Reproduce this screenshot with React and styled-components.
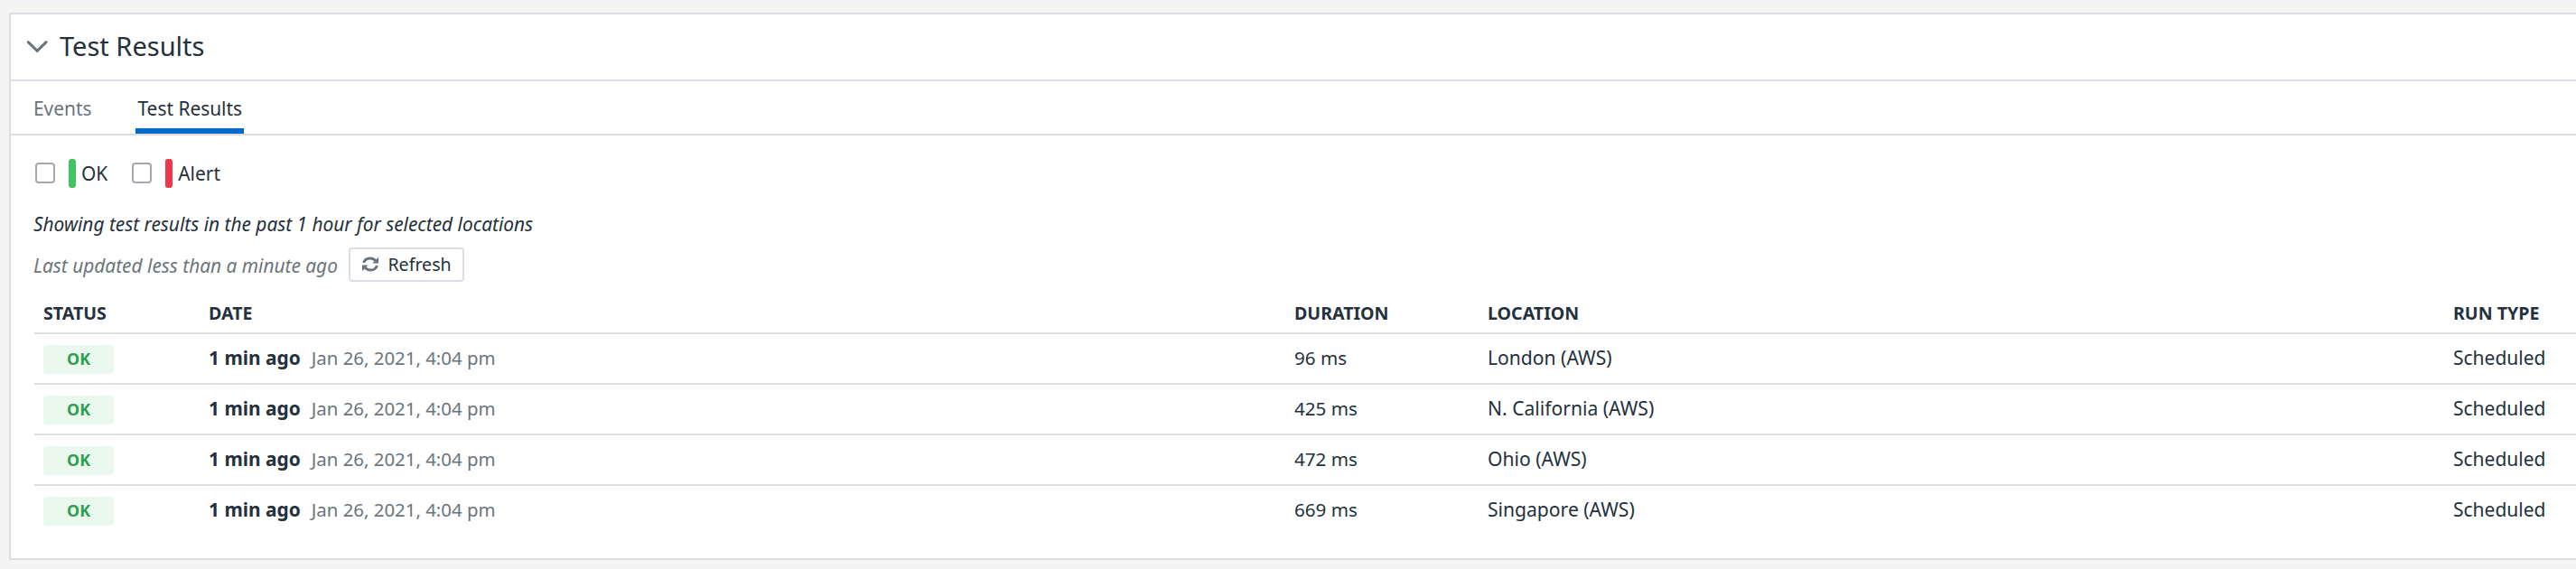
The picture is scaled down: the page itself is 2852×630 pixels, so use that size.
import React from 'react';
import styled, { createGlobalStyle } from 'styled-components';

const ink = '#24313c';
const muted = '#6b757c';
const line = '#dddde3';

const GlobalStyle = createGlobalStyle`
  * { box-sizing: border-box; }
  html, body { margin: 0; padding: 0; }
  body {
    background: #f4f4f4;
    color: ${ink};
    font: 400 20.9px/32px "Noto Sans", sans-serif;
    white-space: nowrap;
    overflow: hidden;
  }
`;

const Page = styled.main`
  height: 630px;
  padding: 14px 0 10px 10px;
`;

const Panel = styled.section`
  height: 606px;
  background: #fff;
  border: 2px solid ${line};
  border-right: 0;
`;

const PanelHeader = styled.header`
  display: flex;
  align-items: center;
  gap: 13px;
  height: 74px;
  padding: 0 0 2px 17px;
  border-bottom: 2px solid ${line};
`;

const Title = styled.h2`
  margin: 0;
  font-size: 29px;
  font-weight: 400;
  line-height: 40px;
`;

const Tabs = styled.nav`
  display: flex;
  gap: 47px;
  height: 60px;
  padding-left: 23px;
  border-bottom: 2px solid ${line};
`;

const Tab = styled.a`
  height: 58px;
  padding: 8px 2px 0;
  line-height: 45px;
  color: ${(p) => (p.$active ? ink : muted)};
  border-bottom: 6px solid ${(p) => (p.$active ? '#006bc9' : 'transparent')};
`;

const Body = styled.div`
  padding: 26px 0 0 26px;
`;

const Filters = styled.div`
  display: flex;
  gap: 26px;
  height: 32px;
`;

const Filter = styled.label`
  display: flex;
  align-items: center;
`;

const Checkbox = styled.input`
  appearance: none;
  width: 22px;
  height: 23px;
  margin: 0 15px 1px 1px;
  border: 2px solid #a3a9ae;
  border-radius: 4px;
  background: #fff;
`;

const Swatch = styled.span`
  width: 8px;
  height: 32px;
  margin-right: 6px;
  border-radius: 3px;
  background: ${(p) => p.$color};
`;

const Summary = styled.p`
  margin: 24px 0 10px -1px;
  font-size: 20.85px;
  font-style: italic;
`;

const Updated = styled.div`
  display: flex;
  gap: 12px;
  height: 38px;
  margin-left: -1px;
`;

const UpdatedText = styled.span`
  padding-top: 4px;
  font-size: 20.85px;
  font-style: italic;
  color: ${muted};
`;

const RefreshButton = styled.button`
  display: flex;
  align-items: center;
  gap: 10.5px;
  width: 128px;
  height: 38px;
  padding: 0 0 1px 13px;
  border: 2px solid ${line};
  border-radius: 4px;
  background: #fff;
  color: ${ink};
  font: 400 19.6px/32px "Noto Sans", sans-serif;
`;

const Row = styled.div`
  display: grid;
  grid-template-columns: 183px 1202px 214px 1069px 1fr;
  align-items: center;
  height: 56px;
  padding: 0 0 0 10px;
  border-bottom: 2px solid ${(p) => (p.$last ? 'transparent' : '#dfdfe2')};
`;

const HeadRow = styled(Row)`
  height: 58px;
  padding-top: 15px;
  font-size: 19.6px;
  font-weight: 700;
`;

const Cell = styled.div`
  padding-bottom: 2px;
  font-size: ${(p) => p.$size || 'inherit'};
`;

const Badge = styled.span`
  display: block;
  width: 78px;
  height: 32px;
  margin-top: 2px;
  border-radius: 4px;
  background: #eaf8ee;
  color: #2f9e4f;
  font-size: 17.8px;
  font-weight: 700;
  line-height: 30px;
  text-align: center;
`;

const Ago = styled.strong`
  margin-right: 12px;
  font-weight: 700;
`;

const Stamp = styled.span`
  font-size: 20.4px;
  color: ${muted};
`;

const ChevronIcon = () => (
  <svg width="24" height="16" viewBox="0 0 24 16" fill="none">
    <path d="M2.3 3.6 12.2 13.4 22.1 3.6" stroke="#6b757c" strokeWidth="3" strokeLinecap="round" />
  </svg>
);

const RefreshIcon = () => (
  <svg width="18" height="17" viewBox="0 0 18 17" fill="none" stroke="#6b757c" strokeWidth="3">
    <path d="M1.7 7C2.5 3.9 5.3 2 8.8 2c2.6 0 4.6 1 6 2.8" />
    <path d="M16.3 10c-.8 3.1-3.6 5-7.1 5-2.6 0-4.6-1-6-2.8" />
    <path d="M18 .8v6.6h-6.6z" fill="#6b757c" stroke="none" />
    <path d="M0 16.2v-6.6h6.6z" fill="#6b757c" stroke="none" />
  </svg>
);

const results = [
  { duration: '96 ms', location: 'London (AWS)' },
  { duration: '425 ms', location: 'N. California (AWS)' },
  { duration: '472 ms', location: 'Ohio (AWS)' },
  { duration: '669 ms', location: 'Singapore (AWS)' },
];

export default function App() {
  return (
    <Page>
      <GlobalStyle />
      <Panel>
        <PanelHeader>
          <ChevronIcon />
          <Title>Test Results</Title>
        </PanelHeader>
        <Tabs>
          <Tab>Events</Tab>
          <Tab $active>Test Results</Tab>
        </Tabs>
        <Body>
          <Filters>
            <Filter><Checkbox type="checkbox" /><Swatch $color="#41c464" />OK</Filter>
            <Filter><Checkbox type="checkbox" /><Swatch $color="#eb364b" />Alert</Filter>
          </Filters>
          <Summary>Showing test results in the past 1 hour for selected locations</Summary>
          <Updated>
            <UpdatedText>Last updated less than a minute ago</UpdatedText>
            <RefreshButton><RefreshIcon />Refresh</RefreshButton>
          </Updated>
          <HeadRow>
            {['STATUS', 'DATE', 'DURATION', 'LOCATION', 'RUN TYPE'].map((h) => <Cell key={h}>{h}</Cell>)}
          </HeadRow>
          {results.map((r, i) => (
            <Row key={r.location} $last={i === results.length - 1}>
              <Badge>OK</Badge>
              <Cell><Ago>1 min ago</Ago><Stamp>Jan 26, 2021, 4:04 pm</Stamp></Cell>
              <Cell $size="20.6px">{r.duration}</Cell>
              <Cell $size="21.1px">{r.location}</Cell>
              <Cell $size="21px">Scheduled</Cell>
            </Row>
          ))}
        </Body>
      </Panel>
    </Page>
  );
}
